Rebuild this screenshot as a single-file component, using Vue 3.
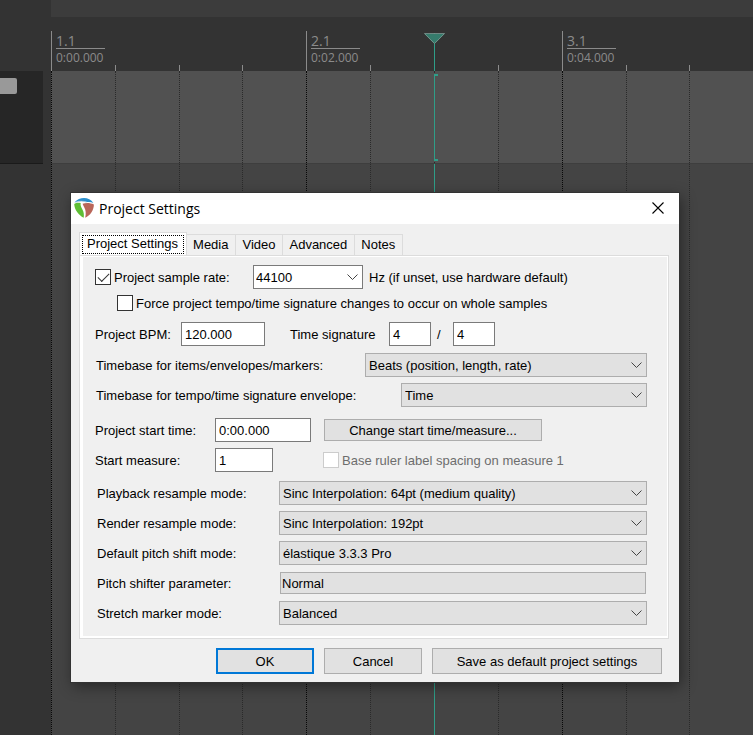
<script setup>
import { ref } from 'vue'

const measures = [
  { bar: '1.1', time: '0:00.000' },
  { bar: '2.1', time: '0:02.000' },
  { bar: '3.1', time: '0:04.000' },
]
const tabs = ['Project Settings', 'Media', 'Video', 'Advanced', 'Notes']
const activeTab = ref('Project Settings')

const useSampleRate = ref(true)
const wholeSamples = ref(false)
const sampleRate = ref('44100')
const bpm = ref('120.000')
const sigTop = ref('4')
const sigBottom = ref('4')
const startTime = ref('0:00.000')
const startMeasure = ref('1')
const pitchParameter = ref('Normal')

const timebases = [
  { id: 'tb-items', label: 'Timebase for items/envelopes/markers:', value: 'Beats (position, length, rate)', size: 'items' },
  { id: 'tb-tempo', label: 'Timebase for tempo/time signature envelope:', value: 'Time', size: 'tempo' },
]
const modes = [
  { id: 'playback', label: 'Playback resample mode:', value: 'Sinc Interpolation: 64pt (medium quality)' },
  { id: 'render', label: 'Render resample mode:', value: 'Sinc Interpolation: 192pt' },
  { id: 'pitch', label: 'Default pitch shift mode:', value: 'élastique 3.3.3 Pro' },
  { id: 'parameter', label: 'Pitch shifter parameter:', value: 'Normal', text: true },
  { id: 'stretch', label: 'Stretch marker mode:', value: 'Balanced' },
]
</script>

<template>
  <main class="daw">
    <aside class="tracks">
      <div class="track"><span class="track-button"></span></div>
    </aside>

    <section class="arrange">
      <div class="strip"></div>
      <div class="ruler">
        <div v-for="m in measures" :key="m.bar" class="measure">
          <div class="stamp">
            <span class="bar">{{ m.bar }}</span>
            <span class="time">{{ m.time }}</span>
          </div>
          <i v-for="b in 4" :key="b" class="tick"></i>
        </div>
      </div>
      <div class="canvas">
        <div v-for="m in measures" :key="m.bar" class="measure">
          <i v-for="b in 4" :key="b" class="beat"></i>
        </div>
      </div>
      <div class="playhead">
        <svg class="marker" width="21" height="11" viewBox="0 0 21 11" aria-hidden="true">
          <path d="M0 0.5H21L10.5 11Z" fill="#367b6c" />
          <path d="M0.5 0.5L10.5 10.5L20.5 0.5Z" fill="none" stroke="#7f9590" stroke-width="0.8" />
        </svg>
        <span class="bracket"></span>
      </div>
    </section>

    <section class="dialog" role="dialog" aria-labelledby="dialog-title">
      <header class="titlebar">
        <svg class="logo" width="20" height="20" viewBox="0 0 20 20" aria-hidden="true">
          <path d="M0.4 4.4C3 1.300 6.600 0 10 0c3.700 0 7.200 1.600 9.400 5C17.400 4 15.500 3.700 13.200 4 9 2.400 4.500 2.700 0.400 4.400Z" fill="#2b8fcd" />
          <path d="M0.200 6C1.800 4.700 4.400 4.300 6.700 5 6.200 7 7 9 8.300 11.200 9.800 13.800 10.200 16.500 9.700 19.800 4.600 17 0.400 11.700 0.200 6Z" fill="#5fbe35" />
          <path d="M8.600 5.800C12 4.500 16.300 4.700 19.900 6.500 19.800 12.500 16.200 17.500 11.200 19.800 12.200 15.600 11.900 12.200 10.200 9.200 9.600 8.100 9 7.200 8.600 5.800Z" fill="#b9665a" />
          <path d="M1.500 4.200C5.500 2.600 9.500 2.900 12.500 4.200" fill="none" stroke="#8cb8d3" stroke-width="0.7" />
        </svg>
        <h1 id="dialog-title">Project Settings</h1>
        <button class="close" type="button" aria-label="Close">
          <svg width="12" height="12" viewBox="0 0 12 12"><path d="M0.500 0.500L11.500 11.500M11.500 0.500L0.500 11.500" stroke="#000" stroke-width="1.100" /></svg>
        </button>
      </header>

      <nav class="tabs" role="tablist">
        <button
          v-for="t in tabs"
          :key="t"
          type="button"
          role="tab"
          class="tab"
          :class="{ active: t === activeTab }"
          :aria-selected="t === activeTab"
          @click="activeTab = t"
        ><span>{{ t }}</span></button>
      </nav>

      <form class="panel" @submit.prevent>
        <div class="row">
          <label class="check"><input v-model="useSampleRate" type="checkbox" />Project sample rate:</label>
          <span class="select rate">
            <select v-model="sampleRate" aria-label="Sample rate"><option>44100</option></select>
            <svg class="chevron" viewBox="0 0 11 6"><path d="M0.500 0.500L5.500 5.500L10.500 0.500" /></svg>
          </span>
          <span>Hz (if unset, use hardware default)</span>
        </div>
        <div class="row whole">
          <label class="check"><input v-model="wholeSamples" type="checkbox" />Force project tempo/time signature changes to occur on whole samples</label>
        </div>

        <div class="row group">
          <label class="bpm-label" for="bpm">Project BPM:</label>
          <input id="bpm" v-model="bpm" class="field bpm" type="text" />
          <label class="sig-label" for="sig">Time signature</label>
          <input id="sig" v-model="sigTop" class="field sig" type="text" />
          <span class="slash">/</span>
          <input v-model="sigBottom" class="field sig" type="text" aria-label="Time signature denominator" />
        </div>

        <div class="stack group">
          <div v-for="t in timebases" :key="t.id" class="row">
            <label :class="t.size" :for="t.id">{{ t.label }}</label>
            <span class="select wide">
              <select :id="t.id"><option>{{ t.value }}</option></select>
              <svg class="chevron" viewBox="0 0 11 6"><path d="M0.500 0.500L5.500 5.500L10.500 0.500" /></svg>
            </span>
          </div>
        </div>

        <div class="stack start">
          <div class="row">
            <label class="start-label" for="start-time">Project start time:</label>
            <input id="start-time" v-model="startTime" class="field clock" type="text" />
            <button class="button change" type="button">Change start time/measure...</button>
          </div>
          <div class="row">
            <label class="start-label" for="start-measure">Start measure:</label>
            <input id="start-measure" v-model="startMeasure" class="field count" type="text" />
            <label class="check base"><input type="checkbox" disabled />Base ruler label spacing on measure 1</label>
          </div>
        </div>

        <div class="stack modes">
          <div v-for="m in modes" :key="m.id" class="row">
            <label class="mode-label" :for="m.id">{{ m.label }}</label>
            <input v-if="m.text" :id="m.id" v-model="pitchParameter" class="parameter" type="text" />
            <span v-else class="select wide">
              <select :id="m.id"><option>{{ m.value }}</option></select>
              <svg class="chevron" viewBox="0 0 11 6"><path d="M0.500 0.500L5.500 5.500L10.500 0.500" /></svg>
            </span>
          </div>
        </div>
      </form>

      <footer class="actions">
        <button class="button primary" type="button">OK</button>
        <button class="button" type="button">Cancel</button>
        <button class="button save" type="button">Save as default project settings</button>
      </footer>
    </section>
  </main>
</template>

<style>
body {
  margin: 0;
  background: #444;
}
</style>

<style scoped>
* {
  box-sizing: border-box;
}

.daw {
  position: relative;
  display: flex;
  min-height: 100vh;
  overflow: hidden;
  background: #333;
  font-family: "Liberation Sans", Arial, sans-serif;
  font-size: 13px;
  color: #000;
}

/* Track list */
.tracks {
  flex: 0 0 51px;
  padding: 71px 8px 0 0;
}

.track {
  height: 93px;
  padding-top: 7px;
  background: #262626;
  border-bottom: 1px solid #1a1a1a;
}

.track-button {
  display: block;
  width: 17px;
  height: 16px;
  border-radius: 0 2px 2px 0;
  background: #999;
}

/* Arrange view */
.arrange {
  position: relative;
  display: flex;
  flex: 1;
  flex-direction: column;
  min-width: 0;
}

.strip {
  height: 17px;
  background: #3c3c3c;
}

.ruler,
.canvas {
  display: grid;
  grid-template-columns: 255px 256px 254px;
  overflow: hidden;
}

.ruler {
  height: 54px;
  padding-top: 14px;
}

.measure {
  position: relative;
  display: grid;
  grid-template-columns: repeat(4, 1fr);
  align-items: end;
}

.tick {
  height: 6px;
  border-left: 1px solid #8b8b8b;
}

.tick:nth-of-type(1) {
  height: 40px;
}

.stamp {
  position: absolute;
  top: 2px;
  left: 5px;
  display: flex;
  flex-direction: column;
  font-family: "Open Sans", sans-serif;
  color: #8b8b8b;
}

.bar {
  height: 16px;
  border-bottom: 1px solid #8b8b8b;
  font-size: 14px;
  line-height: 16px;
}

.time {
  padding-right: 2px;
  font-size: 12px;
  line-height: 17px;
}

.canvas {
  flex: 1;
  background: linear-gradient(#515151 92px, #3e3e3e 92px, #3e3e3e 93px, #444 93px);
}

.canvas .measure {
  align-items: stretch;
}

.beat {
  border-left: 1px dotted #2a2a2a;
}

.beat:first-child {
  border-color: #080808;
}

/* Playhead over the grid */
.playhead {
  position: absolute;
  top: 33px;
  bottom: 0;
  left: 373px;
  width: 21px;
  background: linear-gradient(#2f9e88 38px, transparent 38px, transparent 41px, #2f9e88 41px, #2f9e88 128px, transparent 128px, transparent 131px, #2f9e88 131px) center / 1px 100% no-repeat;
}

.marker {
  display: block;
}

.bracket {
  display: block;
  width: 4px;
  height: 87px;
  margin: 30px 0 0 10px;
  border: 2px solid #2f9e88;
  border-width: 2px 0 2px 1px;
}

/* Dialog window */
.dialog {
  position: absolute;
  top: 193px;
  right: 74px;
  left: 71px;
  background: #f0f0f0;
  box-shadow: 0 0 0 1px #333, 2px 4px 14px rgba(0, 0, 0, 0.45);
}

.titlebar {
  display: flex;
  align-items: center;
  height: 31px;
  padding: 0 14px 1px 3px;
  background: #fff;
}

h1 {
  flex: 1;
  margin: 0 0 0 5px;
  font-family: "Open Sans", sans-serif;
  font-size: 14px;
  font-weight: 400;
}

.close {
  display: flex;
  padding: 1px;
  border: 0;
  background: none;
}

.tabs {
  display: flex;
  align-items: flex-end;
  margin-top: 8px;
  padding-left: 8px;
}

.tab {
  height: 21px;
  padding: 0 7px 0 6px;
  border: 1px solid #dcdcdc;
  border-width: 1px 1px 0 0;
  background: #f0f0f0;
  font: inherit;
  line-height: 20px;
}

.tab.active {
  height: 23px;
  padding: 2px;
  border-left-width: 1px;
  background: #fff;
  line-height: 16px;
}

.tab.active span {
  display: block;
  height: 19px;
  padding: 0 5px 0 4px;
  border: 1px dotted #000;
}

.panel {
  margin: 0 10px 0 8px;
  padding: 9px 21px 13px 13px;
  border: 1px solid #dcdcdc;
  box-shadow: inset 3px -2px #fff, inset -1px 1px #fff;
}

.row {
  display: flex;
  align-items: center;
  height: 24px;
  white-space: nowrap;
}

.stack {
  display: flex;
  flex-direction: column;
  gap: 6px;
}

.group {
  margin-top: 7px;
}

.whole {
  margin-top: 2px;
}

.row:first-child > .check {
  flex: 0 0 158px;
}

.panel > .row,
.start {
  padding-left: 2px;
}

.panel > .whole {
  padding-left: 24px;
}

.start {
  margin-top: 11px;
}

.modes {
  margin-top: 9px;
  padding-left: 4px;
}

.panel > .group.stack {
  padding-left: 3px;
}

.check {
  display: flex;
  align-items: center;
  gap: 3px;
}

.check input {
  display: grid;
  place-items: center;
  width: 16px;
  height: 16px;
  margin: 0;
  border: 1px solid #333;
  background: #fff;
  appearance: none;
}

.check input:checked::before {
  width: 10px;
  height: 5px;
  margin-top: -3px;
  border: solid #333;
  border-width: 0 0 1px 1px;
  content: "";
  transform: rotate(-45deg);
}

.check input:disabled {
  border-color: #ccc;
}

.field,
.parameter,
select {
  height: 24px;
  margin: 0;
  padding: 0 3px;
  border: 1px solid #7a7a7a;
  border-radius: 0;
  background: #fff;
  color: #000;
  font: inherit;
  appearance: none;
}

.select {
  position: relative;
  display: flex;
}

.select select {
  width: 100%;
  padding-right: 24px;
}

.wide {
  flex: 1;
}

.wide select,
.parameter {
  border-color: #adadad;
  background: #e1e1e1;
}

.chevron {
  position: absolute;
  top: 9px;
  right: 5px;
  width: 11px;
  height: 6px;
  fill: none;
  stroke: #444;
  pointer-events: none;
}

.rate {
  width: 110px;
  margin-right: 6px;
}

.rate select {
  padding-left: 2px;
}

.bpm-label {
  width: 86px;
}

.bpm {
  width: 84px;
}

.sig-label {
  width: 99px;
  margin-left: 25px;
}

.sig {
  width: 42px;
}

.slash {
  width: 22px;
  padding-left: 6px;
}

.items {
  width: 269px;
}

.tempo {
  width: 305px;
}

.start-label {
  width: 120px;
}

.clock {
  width: 96px;
}

.count {
  width: 58px;
}

.base {
  margin-left: 50px;
  color: #6d6d6d;
}

.mode-label {
  width: 182px;
}

.parameter {
  flex: 1;
  height: 22px;
  margin: 0 1px;
  padding: 0 1px;
}

.button {
  width: 98px;
  height: 26px;
  padding: 0;
  border: 1px solid #adadad;
  background: #e1e1e1;
  color: #000;
  font: inherit;
}

.change {
  width: 218px;
  height: 22px;
  margin-left: 13px;
}

.primary {
  border: 2px solid #0078d7;
}

.save {
  width: 230px;
}

.actions {
  display: flex;
  justify-content: flex-end;
  gap: 10px;
  padding: 9px 17px 8px;
}
</style>
